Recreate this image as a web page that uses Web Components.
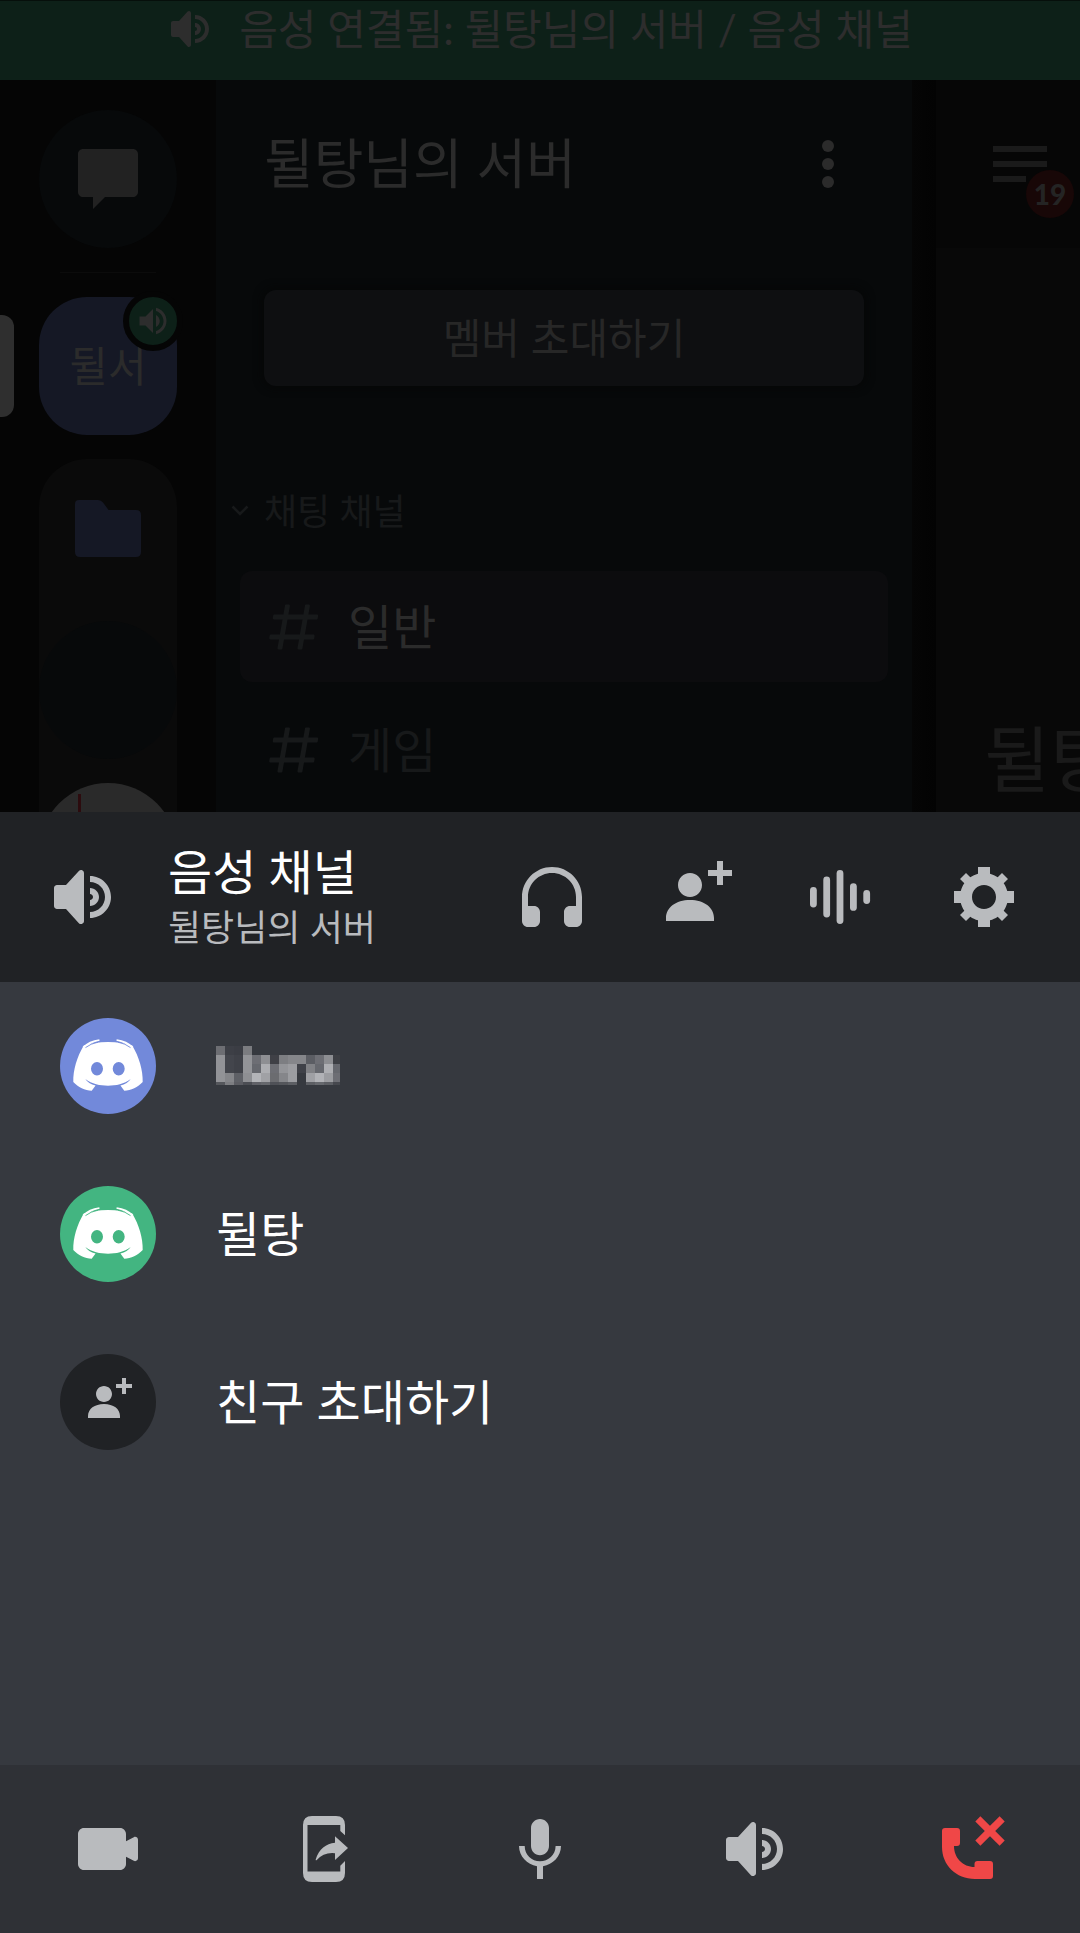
<!DOCTYPE html>
<html lang="ko">
<head>
<meta charset="utf-8">
<meta name="viewport" content="width=device-width, initial-scale=1">
<title>음성 채널</title>
<style>
  body { margin: 0; background: #36393f; font-family: Lato, "Noto Sans CJK KR", sans-serif; color: #fff; }
</style>
</head>
<body>
<voice-app></voice-app>

<script>
const ICONS = {
  speaker: ['0 0 24 24', '<path d="M11.383 3.079C11.009 2.925 10.579 3.01 10.293 3.296L6 8.002H3C2.45 8.002 2 8.453 2 9.002V15.002C2 15.552 2.45 16.002 3 16.002H6L10.293 20.71C10.579 20.996 11.009 21.082 11.383 20.927C11.757 20.772 12 20.407 12 20.002V4.002C12 3.599 11.757 3.232 11.383 3.079ZM14 5.002V7.002C16.757 7.002 19 9.246 19 12.002C19 14.759 16.757 17.002 14 17.002V19.002C17.86 19.002 21 15.863 21 12.002C21 8.143 17.86 5.002 14 5.002ZM14 9.002C15.654 9.002 17 10.349 17 12.002C17 13.657 15.654 15.002 14 15.002V13.002C14.551 13.002 15 12.553 15 12.002C15 11.451 14.551 11.002 14 11.002V9.002Z"/>'],
  volume: ['0 0 24 24', '<path d="M3 9v6h4l5 5V4L7 9H3zm13.500 3c0-1.770-1.020-3.290-2.500-4.030v8.050c1.480-.73 2.500-2.250 2.500-4.020zM14 3.230v2.060c2.890.86 5 3.540 5 6.710s-2.110 5.850-5 6.710v2.060c4.010-.91 7-4.490 7-8.770s-2.990-7.860-7-8.770z"/>'],
  message: ['0 0 24 24', '<path d="M3.700 2H20.300C21.240 2 22 2.760 22 3.700V16.300C22 17.240 21.240 18 20.300 18H11L7 22V18H3.700C2.760 18 2 17.240 2 16.300V3.700C2 2.760 2.760 2 3.700 2Z"/>'],
  folder: ['0 0 66 57', '<path d="M4 0H23Q26 0 28 2.500L33.500 10H61Q66 10 66 15V52Q66 57 61 57H5Q0 57 0 52V4Q0 0 4 0Z"/>'],
  more: ['0 0 24 24', '<circle cx="12" cy="6" r="2"/><circle cx="12" cy="12" r="2"/><circle cx="12" cy="18" r="2"/>'],
  menu: ['0 0 54 36', '<path d="M0 0H54V6H0zM0 15H54V21H0zM0 30H33V36H0z"/>'],
  chevron: ['0 0 18 12', '<path d="M1.500 1.500L9 9L16.500 1.500" fill="none" stroke="currentColor" stroke-width="2.600"/>'],
  hash: ['0 0 24 24', '<path d="M5.887 21C5.575 21 5.340 20.719 5.394 20.413L6 17H2.595C2.284 17 2.049 16.720 2.103 16.414L2.278 15.414C2.319 15.175 2.527 15 2.770 15H6.350L7.410 9H4.005C3.694 9 3.459 8.720 3.513 8.414L3.688 7.414C3.729 7.175 3.937 7 4.180 7H7.760L8.397 3.413C8.439 3.174 8.647 3 8.889 3H9.873C10.185 3 10.420 3.281 10.366 3.587L9.760 7H15.760L16.397 3.413C16.439 3.174 16.647 3 16.889 3H17.873C18.185 3 18.420 3.281 18.366 3.587L17.760 7H21.165C21.476 7 21.711 7.280 21.657 7.586L21.482 8.586C21.441 8.825 21.233 9 20.990 9H17.410L16.350 15H19.755C20.066 15 20.301 15.280 20.247 15.586L20.072 16.586C20.031 16.825 19.823 17 19.580 17H16L15.363 20.587C15.321 20.826 15.113 21 14.871 21H13.887C13.576 21 13.340 20.719 13.394 20.413L14 17H8L7.363 20.587C7.321 20.826 7.113 21 6.871 21H5.887ZM9.410 9L8.350 15H14.350L15.410 9H9.410Z"/>'],
  headphones: ['0 0 24 24', '<path d="M12 2.003C6.486 2.003 2 6.488 2 12.003V20.003C2 21.107 2.895 22.003 4 22.003H6C7.104 22.003 8 21.107 8 20.003V17.003C8 15.899 7.104 15.003 6 15.003H4V12.003C4 7.591 7.589 4.003 12 4.003C16.411 4.003 20 7.591 20 12.003V15.003H18C16.896 15.003 16 15.899 16 17.003V20.003C16 21.107 16.896 22.003 18 22.003H20C21.104 22.003 22 21.107 22 20.003V12.003C22 6.488 17.514 2.003 12 2.003Z"/>'],
  invite: ['0 0 24 24', '<path d="M21 3H24V5H21V8H19V5H16V3H19V0H21V3ZM10 12C12.205 12 14 10.205 14 8C14 5.795 12.205 4 10 4C7.795 4 6 5.795 6 8C6 10.205 7.795 12 10 12ZM10 13C5.289 13 2 15.467 2 19V20H18V19C18 15.467 14.711 13 10 13Z"/>'],
  wave: ['0 0 72 72', '<rect x="6" y="26" width="6.800" height="20.500" rx="3.400"/><rect x="19.300" y="15.500" width="6.800" height="41" rx="3.400"/><rect x="32.600" y="9" width="6.800" height="54" rx="3.400"/><rect x="46" y="22.200" width="6.800" height="27.600" rx="3.400"/><rect x="59.300" y="29" width="6.800" height="14" rx="3.400"/>'],
  gear: ['0 0 24 24', '<path fill-rule="evenodd" d="M19.738 10H22V14H19.739C19.498 14.931 19.100 15.798 18.565 16.564L20 18L18 20L16.565 18.564C15.797 19.099 14.932 19.498 14 19.738V22H10V19.738C9.069 19.498 8.203 19.099 7.436 18.564L6 20L4 18L5.436 16.564C4.901 15.799 4.502 14.932 4.262 14H2V10H4.262C4.502 9.068 4.900 8.202 5.436 7.436L4 6L6 4L7.436 5.436C8.202 4.900 9.068 4.502 10 4.262V2H14V4.261C14.932 4.502 15.797 4.900 16.565 5.435L18 3.999L20 5.999L18.564 7.436C19.099 8.202 19.498 9.069 19.738 10ZM12 16C14.209 16 16 14.209 16 12C16 9.791 14.209 8 12 8C9.791 8 8 9.791 8 12C8 14.209 9.791 16 12 16Z"/>'],
  camera: ['0 0 24 24', '<path d="M4 5H16C17.100 5 18 5.900 18 7V9.400L20.600 8.050C21.260 7.750 22 8.200 22 8.900V15.100C22 15.800 21.260 16.250 20.600 15.950L18 14.600V17C18 18.100 17.100 19 16 19H4C2.900 19 2 18.100 2 17V7C2 5.900 2.900 5 4 5Z"/>'],
  share: ['0 0 72 72', '<path d="M24 3H48Q57 3 57 12V22.300L52.300 18V12H19.500V58.500H52.300V52.700L57 48V60Q57 69 48 69H24Q15 69 15 60V12Q15 3 24 3Z"/><path d="M47 23.300L60 35L47 47V40.300Q36 39 28.500 47.300Q27.600 47.600 27.700 46.500C31 36 38 30.500 47 29.700Z"/>'],
  mic: ['0 0 24 24', '<path d="M12 2C13.660 2 15 3.340 15 5V11C15 12.660 13.660 14.100 12 14.100C10.340 14.100 9 12.660 9 11V5C9 3.340 10.340 2 12 2ZM12 16.100C14.760 16.100 17.200 14 17.200 11H19C19 14.420 16.280 17.240 13 17.720V22H11V17.720C7.720 17.230 5 14.410 5 11H6.900C6.900 14 9.240 16.100 12 16.100Z"/>'],
  hangup: ['0 0 72 72', '<path d="M9 15H21Q24 15 24 18V30Q24 33 21 33H18C18 45 27 54 38.500 54V51Q38.500 48 41.500 48H54Q57 48 57 51V63Q57 66 54 66H39C20 66 6 52 6 34V18Q6 15 9 15Z"/><g transform="translate(54 18) rotate(45)"><rect x="-17.200" y="-3.600" width="34.400" height="7.200"/><rect x="-3.600" y="-17.200" width="7.200" height="34.400"/></g>'],
  logo: ['0 0 96 96', '<path fill="#fff" d="M23.700 27.500Q34 24 48 24Q62 24 72.300 27.500C79 39 83 52 82.700 64C78 69 71 72.500 64.300 72.700L60.400 67.500C65 66.300 69 64 70.700 61C64 66 56 67.700 48 67.700C40 67.700 32 66 25.300 61C27 64 31 66.300 35.600 67.500L31.700 72.700C25 72.500 18 69 13.300 64C13 52 17 39 23.700 27.500ZM37 44A6 6.700 0 1 0 37 57.400A6 6.700 0 1 0 37 44ZM58.700 44A6 6.700 0 1 0 58.700 57.400A6 6.700 0 1 0 58.700 44Z"/><path fill="#fff" d="M22.500 29Q29 22.500 39.300 21.200L39.600 22.700Q32 24 26 29ZM73.500 29Q67 22.500 56.700 21.200L56.400 22.700Q64 24 70 29Z"/><path fill="none" stroke="currentColor" stroke-width="0.900" d="M25.500 29.600Q30.500 25.600 38 24.200M70.500 29.600Q65.500 25.600 58 24.200"/>']
};

function define(name, html, setup) {
  const tpl = document.createElement('template');
  tpl.innerHTML = html;
  customElements.define(name, class extends HTMLElement {
    constructor() {
      super();
      this.attachShadow({ mode: 'open' }).append(tpl.content.cloneNode(true));
    }
    connectedCallback() { if (setup) setup(this, this.shadowRoot); }
  });
}

/* Icon: size comes from --size, or from --w and --h when it is not square. */
define('ui-icon', `<style>
  :host { display: block; flex: none; width: var(--w, var(--size, 72px)); height: var(--h, var(--size, 72px)); }
  svg { display: block; width: 100%; height: 100%; fill: currentColor; }
</style><svg aria-hidden="true"></svg>`, (el, root) => {
  const [box, body] = ICONS[el.getAttribute('name')];
  const svg = root.querySelector('svg');
  svg.setAttribute('viewBox', box);
  svg.innerHTML = body;
});

define('icon-button', `<style>
  :host { display: flex; color: #b9bbbe; }
  button { flex: 1; display: flex; align-items: center; justify-content: center; padding: 0; border: 0; background: none; color: inherit; font: inherit; cursor: pointer; }
</style><button type="button"><slot></slot></button>`, (el, root) => {
  root.querySelector('button').setAttribute('aria-label', el.getAttribute('label'));
});

define('voice-banner', `<style>
  :host { display: flex; justify-content: center; flex: none; height: 80px; box-sizing: border-box; padding-bottom: 24px; border-top: 1px solid #060f0b; background: #0d2018; color: #2d2d2d; }
  a { display: flex; align-items: center; gap: 24px; color: inherit; text-decoration: none; font-size: 42px; line-height: 54px; white-space: nowrap; }
  ui-icon { --size: 48px; }
</style><a href="#voice"><ui-icon name="speaker"></ui-icon><span><slot></slot></span></a>`);

define('server-rail', `<style>
  :host { display: flex; flex-direction: column; align-items: center; gap: 24px; flex: none; width: 216px; box-sizing: border-box; padding-top: 30px; background: #050505; overflow: hidden; }
  button { padding: 0; border: 0; font: inherit; cursor: pointer; }
  .tile { flex: none; width: 138px; height: 138px; border-radius: 69px; background: #07090a; display: flex; align-items: center; justify-content: center; color: #222; }
  hr { flex: none; width: 96px; height: 1px; margin: 0; border: 0; background: #0b0b0b; }
  .active { position: relative; flex: none; align-self: stretch; display: flex; justify-content: center; }
  .active .tile { border-radius: 48px; background: #151825; color: #2b2b2b; font-size: 42px; line-height: 48px; }
  .pill { position: absolute; left: 0; top: 18px; width: 14px; height: 102px; border-radius: 0 12px 12px 0; background: #2f2f2f; }
  .badge { position: absolute; right: 33px; top: -6px; width: 48px; height: 48px; border: 6px solid #050505; border-radius: 50%; background: #0d2018; color: #2d2d2d; display: flex; align-items: center; justify-content: center; --size: 36px; }
  .group { flex: none; display: flex; flex-direction: column; gap: 24px; border-radius: 48px; background: #0a0a0a; }
  .folder { background: none; color: #151825; --w: 66px; --h: 57px; }
  .photo { background: linear-gradient(90deg, #0000 39px, #2c0b0e 39px 42px, #0000 42px) 0 11px no-repeat, #2a2a2a; }
</style>
<button class="tile" type="button" aria-label="다이렉트 메시지"><ui-icon name="message"></ui-icon></button>
<hr>
<div class="active"><span class="pill"></span><button class="tile" type="button">뒬서</button><span class="badge"><ui-icon name="volume"></ui-icon></span></div>
<div class="group">
  <button class="tile folder" type="button" aria-label="서버 폴더"><ui-icon name="folder"></ui-icon></button>
  <button class="tile" type="button" aria-label="서버"></button>
  <button class="tile photo" type="button" aria-label="서버"></button>
</div>`);

define('channel-row', `<style>
  :host { display: block; color: #17191a; }
  a { display: flex; align-items: center; gap: 24px; height: 111px; padding: 0 24px; border-radius: 12px; color: inherit; text-decoration: none; font-size: 48px; line-height: 60px; }
  ui-icon { --size: 60px; color: #17191a; }
  :host([selected]) { color: #2b2b2b; }
  :host([selected]) a { background: #0c0c0e; }
</style><a href="#channel"><ui-icon name="hash"></ui-icon><span><slot></slot></span></a>`);

define('channel-panel', `<style>
  :host { display: flex; flex-direction: column; flex: 1; min-width: 0; background: #07090a; color: #2b2b2b; overflow: hidden; }
  header { display: flex; align-items: center; justify-content: space-between; flex: none; height: 168px; padding: 0 48px; }
  h1 { margin: 0; font-size: 54px; line-height: 72px; font-weight: 400; white-space: nowrap; }
  icon-button { color: inherit; }
  .invite { flex: none; height: 96px; margin: 42px 48px 0; border: 0; border-radius: 12px; background: #0e0f11; box-shadow: 0 0 9px 2px #060707; color: #272727; font: inherit; font-size: 42px; line-height: 48px; cursor: pointer; }
  h2 { display: flex; align-items: center; gap: 15px; margin: 65px 0 0; padding-left: 15px; height: 120px; font-size: 36px; line-height: 48px; font-weight: 400; color: #17191a; }
  h2 ui-icon { --w: 18px; --h: 12px; }
  nav { display: flex; flex-direction: column; gap: 12px; padding: 0 24px; }
</style>
<header><h1>뒬탕님의 서버</h1><icon-button label="더 보기"><ui-icon name="more"></ui-icon></icon-button></header>
<button class="invite" type="button">멤버 초대하기</button>
<h2><ui-icon name="chevron"></ui-icon>채팅 채널</h2>
<nav><channel-row selected>일반</channel-row><channel-row>게임</channel-row></nav>`);

define('chat-peek', `<style>
  :host { display: flex; flex: none; width: 168px; background: linear-gradient(90deg, #050505, #030303 24px, #080808 24px); overflow: hidden; }
  section { flex: 1; min-width: 0; display: flex; flex-direction: column; margin-left: 24px; }
  header { display: flex; align-items: center; flex: none; height: 168px; padding-left: 57px; background: #060606; color: #1a1a1a; }
  .menu { position: relative; --w: 54px; --h: 36px; }
  .menu icon-button { color: inherit; }
  .count { position: absolute; left: 33px; top: 24px; width: 48px; height: 48px; border-radius: 50%; background: #180707; color: #242424; text-align: center; font-size: 28px; line-height: 48px; font-weight: 900; }
  h2 { margin: 462px 0 0 48px; font-size: 72px; line-height: 96px; font-weight: 400; color: #1a1a1a; white-space: nowrap; }
</style>
<section>
  <header><div class="menu"><icon-button label="메뉴"><ui-icon name="menu"></ui-icon></icon-button><span class="count">19</span></div></header>
  <h2>뒬탕</h2>
</section>`);

define('sheet-header', `<style>
  :host { display: flex; align-items: center; flex: none; height: 170px; box-sizing: border-box; padding: 0 24px 0 48px; background: #202225; }
  ui-icon { color: #b9bbbe; }
  .text { flex: 1; min-width: 0; padding-left: 48px; }
  h1, p { margin: 0; font-weight: 400; white-space: nowrap; }
  h1 { font-size: 48px; line-height: 60px; }
  p { font-size: 36px; line-height: 50px; color: #b9bbbe; }
  icon-button { width: 144px; height: 144px; }
</style>
<ui-icon name="speaker"></ui-icon>
<div class="text"><h1>음성 채널</h1><p>뒬탕님의 서버</p></div>
<icon-button label="오디오 출력"><ui-icon name="headphones"></ui-icon></icon-button>
<icon-button label="초대"><ui-icon name="invite"></ui-icon></icon-button>
<icon-button label="소음 제거"><ui-icon name="wave"></ui-icon></icon-button>
<icon-button label="설정"><ui-icon name="gear"></ui-icon></icon-button>`);

define('member-row', `<style>
  :host { display: block; }
  button { display: flex; align-items: center; gap: 60px; width: 100%; height: 168px; padding: 0 60px; border: 0; background: none; color: #fff; font: inherit; font-size: 48px; line-height: 60px; text-align: left; cursor: pointer; }
  .avatar { flex: none; display: flex; align-items: center; justify-content: center; width: 96px; height: 96px; border-radius: 50%; background: var(--avatar); color: var(--mark, var(--avatar)); --size: var(--icon, 96px); }
</style><button type="button"><span class="avatar"></span><span><slot></slot></span></button>`, (el, root) => {
  const icon = document.createElement('ui-icon');
  icon.setAttribute('name', el.getAttribute('icon'));
  root.querySelector('.avatar').replaceChildren(icon);
});

/* A name hidden behind grey blocks: each string is one line of 9px blocks. */
const BLOCKS = [
  '6d6e73 3d3f46 3b3d44 7b7c80',
  '929397 43454c 3f4148 939498 6d6e74 8e8f93 3f4046 7d7e82 85868a 85868a 5b5d63 6d6e74 8d8e92 3d3f44',
  '929397 43454c 3f4148 939498 66686e adaeb2 6d6e74 949599 9c9da1 3f4148 808185 66686e aeafb3 66686e',
  '929397 85868a 5e6066 8e8f93 b3b4b8 a0a1a5 6b6c70 85868a 9c9da1 36393f 9fa0a4 b1b2b6 9c9da1 6d6e74',
  '55575c 7d7e82 5b5c62 4b4d53 606167 66686d 4f5157 54565b 5c5e63 36393f 5c5e63 66686d 5c5e63 46484e'
];
define('masked-name', `<style>
  :host { display: block; }
  svg { display: block; width: 124px; height: 39px; }
</style><svg viewBox="0 0 124 39" role="img" aria-label="가린 이름" shape-rendering="crispEdges"></svg>`, (el, root) => {
  root.querySelector('svg').innerHTML = BLOCKS.map((line, y) => line.split(' ').map((c, x) =>
    `<rect x="${x * 9}" y="${y * 9}" width="9" height="9" fill="#${c}"/>`).join('')).join('');
});

define('call-controls', `<style>
  :host { display: flex; flex: none; height: 168px; background: #2f3136; }
  icon-button { flex: 1; }
  .end { color: #f04747; }
</style>
<icon-button label="카메라"><ui-icon name="camera"></ui-icon></icon-button>
<icon-button label="화면 공유"><ui-icon name="share"></ui-icon></icon-button>
<icon-button label="마이크"><ui-icon name="mic"></ui-icon></icon-button>
<icon-button label="스피커"><ui-icon name="speaker"></ui-icon></icon-button>
<icon-button class="end" label="연결 끊기"><ui-icon name="hangup"></ui-icon></icon-button>`);

define('voice-sheet', `<style>
  :host { display: flex; flex-direction: column; flex: 0 0 58vh; background: #36393f; }
  main { flex: 1; }
</style>
<sheet-header></sheet-header>
<main>
  <member-row icon="logo" style="--avatar:#7289da"><masked-name></masked-name></member-row>
  <member-row icon="logo" style="--avatar:#43b581">뒬탕</member-row>
  <member-row icon="invite" style="--avatar:#202225;--mark:#b9bbbe;--icon:48px">친구 초대하기</member-row>
</main>
<call-controls></call-controls>`);

define('voice-app', `<style>
  :host { display: flex; flex-direction: column; height: 100vh; }
  .back { flex: 1; min-height: 0; display: flex; flex-direction: column; overflow: hidden; background: #050505; }
  .columns { flex: 1; min-height: 0; display: flex; overflow: hidden; }
</style>
<div class="back">
  <voice-banner>음성 연결됨: 뒬탕님의 서버 / 음성 채널</voice-banner>
  <div class="columns"><server-rail></server-rail><channel-panel></channel-panel><chat-peek></chat-peek></div>
</div>
<voice-sheet></voice-sheet>`);
</script>
</body>
</html>
